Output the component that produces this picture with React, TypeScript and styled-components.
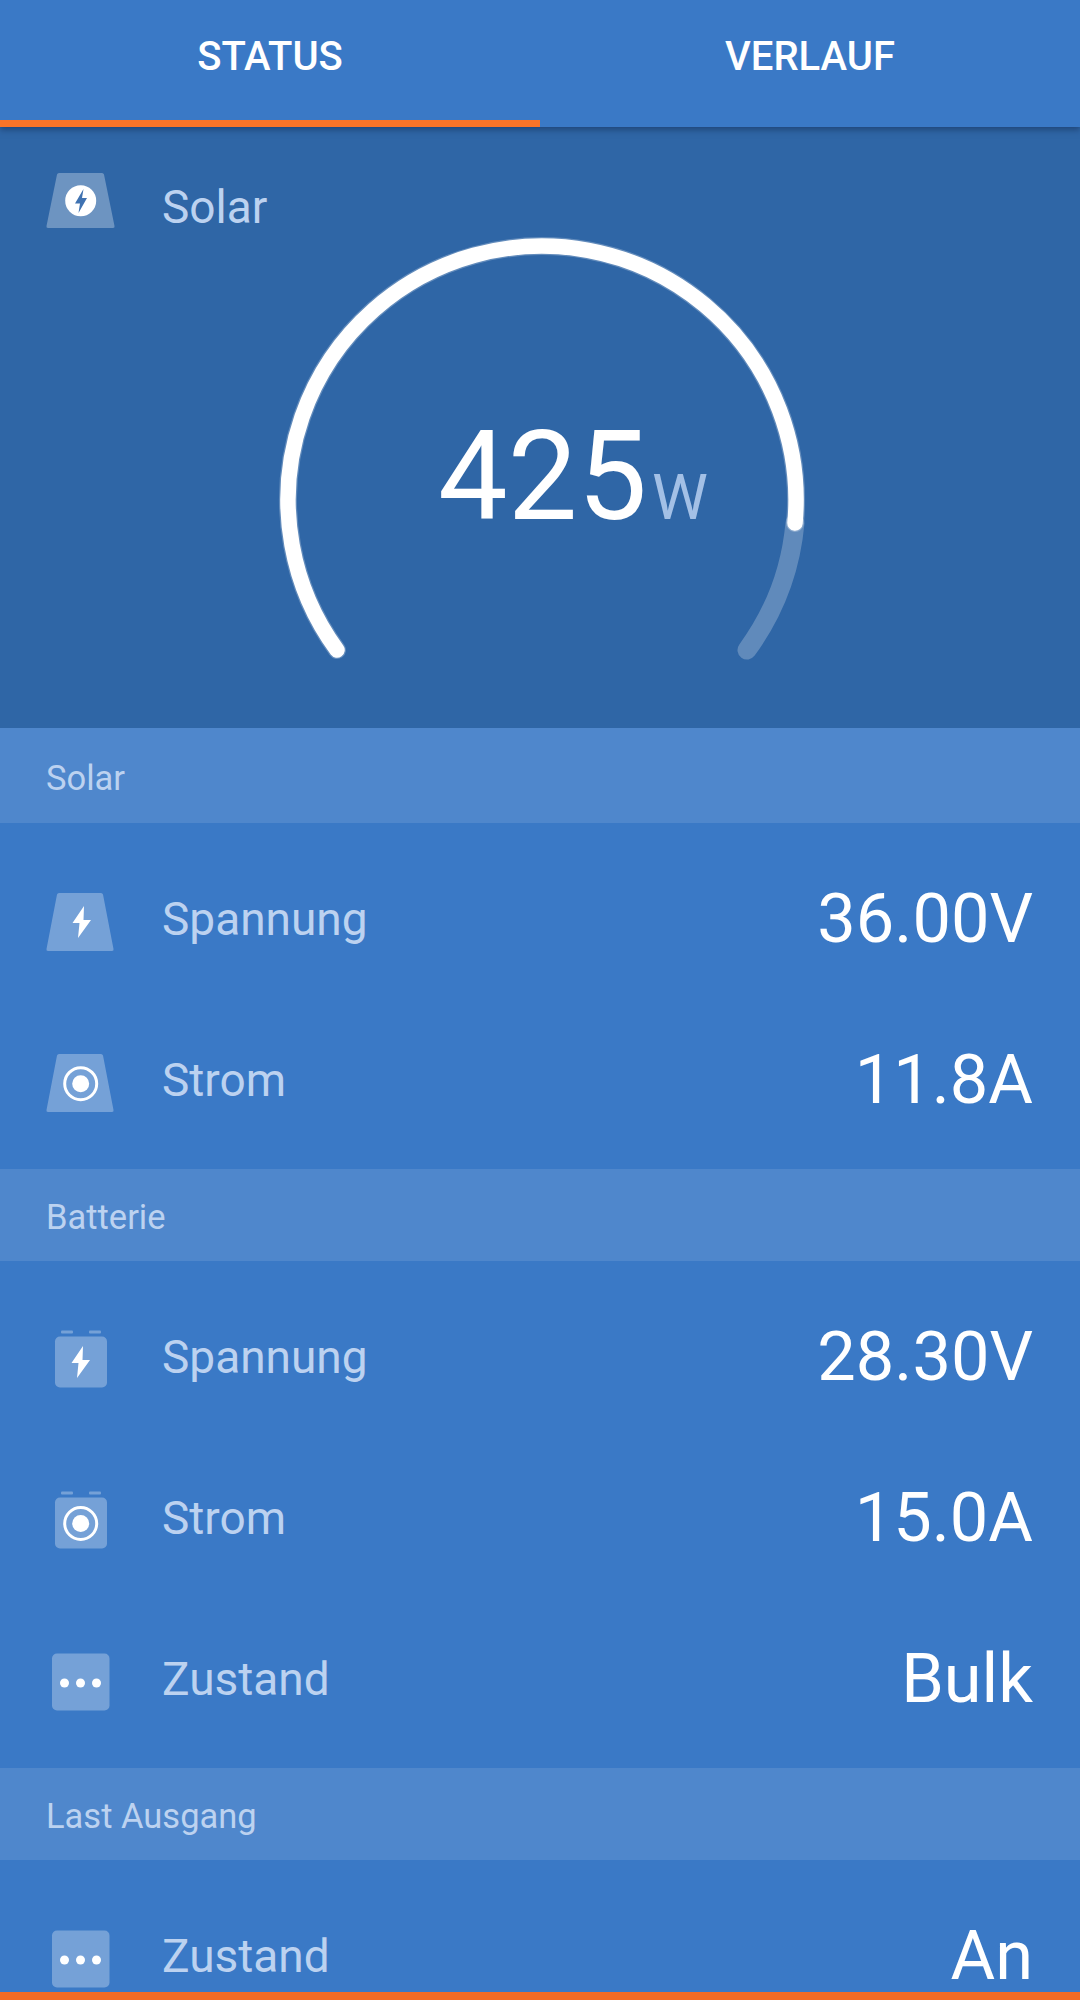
import React from "react";
import styled, { createGlobalStyle } from "styled-components";

const Global = createGlobalStyle`
  html, body { margin: 0; padding: 0; background: #3a79c6; }
  body { font-family: Roboto, "Liberation Sans", sans-serif; }
`;

const Page = styled.div`
  width: 1080px;
  height: 2000px;
  display: flex;
  flex-direction: column;
  overflow: hidden;
  background: #3a79c6;
  color: #fff;
`;

const TabBar = styled.nav`
  position: relative;
  z-index: 1;
  height: 127px;
  flex: none;
  display: grid;
  grid-template-columns: 1fr 1fr;
  background: #3a79c6;
  box-shadow: 0 3px 6px rgba(20, 45, 85, 0.55);
`;

const Tab = styled.div<{ $active?: boolean }>`
  display: flex;
  align-items: flex-start;
  justify-content: center;
  padding-top: 34px;
  box-sizing: border-box;
  font-size: 40px;
  line-height: 46px;
  font-weight: 500;
  color: #fff;
  border-bottom: 7px solid ${(p) => (p.$active ? "#f97428" : "transparent")};
`;

const Hero = styled.section`
  height: 601px;
  flex: none;
  background: #2f66a6;
  display: flex;
  flex-direction: column;
`;

const HeroHead = styled.div`
  height: 108px;
  flex: none;
  box-sizing: border-box;
  padding: 46px 0 0 46px;
  display: flex;
  align-items: flex-start;
  gap: 48px;
`;

const IconSlot = styled.div`
  width: 68px;
  height: 68px;
  flex: none;
  svg { display: block; }
`;

const Label = styled.span`
  font-size: 46px;
  line-height: 68px;
  font-weight: 400;
  color: #bcd2f0;
`;

const GaugeWrap = styled.div`
  position: relative;
  width: 1080px;
  height: 493px;
  svg { display: block; }
`;

const Reading = styled.div`
  position: absolute;
  left: 438px;
  top: 177px;
  display: flex;
  align-items: baseline;
  line-height: 130px;
`;

const ReadingValue = styled.span`
  font-size: 124px;
  font-weight: 400;
  color: #fff;
`;

const ReadingUnit = styled.span`
  font-size: 63px;
  margin-left: 5px;
  color: #a3c0e6;
`;

const List = styled.div`
  flex: 1;
  min-height: 0;
`;

const SectionHead = styled.div<{ $h: number }>`
  height: ${(p) => p.$h}px;
  box-sizing: border-box;
  padding: 4px 0 0 46px;
  display: flex;
  align-items: center;
  background: #4f87cc;
  font-size: 34.5px;
  color: #bcd2f0;
`;

const Rows = styled.div`
  padding: 18px 0 6px;
`;

const Row = styled.div`
  height: 161px;
  box-sizing: border-box;
  padding: 0 47px 0 46px;
  display: flex;
  align-items: center;
  gap: 48px;
  ${Label} { margin-bottom: 5px; }
`;

const Value = styled.span`
  margin-left: auto;
  margin-bottom: 4px;
  font-size: 68.5px;
  line-height: 1;
  font-weight: 400;
  color: #fff;
`;

const BottomBar = styled.div`
  position: relative;
  height: 8px;
  flex: none;
  background: #f26b25;
`;

const BOLT = "M38 18 L26.5 35 L33.5 35 L32 50 L45 32 L37.5 32 Z";
const ROW_TRAP = "M11 6.5 Q11.5 5 13 5 H55 Q56.5 5 57 6.5 L67.5 61 Q68 63 66 63 H2 Q0 63 0.5 61 Z";
const HERO_TRAP = "M11 1.5 Q11.5 0 13 0 H56 Q57.5 0 58 1.5 L68.5 53 Q69 55 67 55 H2 Q0 55 0.5 53 Z";
const FILL = "rgba(255,255,255,0.3)";

const Trapezoid = ({ d, children }: { d: string; children: React.ReactNode }) => (
  <svg width="70" height="68" viewBox="0 0 70 68">
    <path d={d} fill={FILL} />
    {children}
  </svg>
);

const Battery = ({ children }: { children: React.ReactNode }) => (
  <svg width="68" height="68" viewBox="0 0 68 68">
    <rect x="15" y="4.5" width="12" height="3" rx="1" fill={FILL} />
    <rect x="43" y="4.5" width="12" height="3" rx="1" fill={FILL} />
    <rect x="9" y="10.5" width="52" height="51" rx="5" fill={FILL} />
    {children}
  </svg>
);

const Target = ({ cy }: { cy: number }) => (
  <g>
    <circle cx="34.7" cy={cy} r="16" fill="none" stroke="#fff" strokeWidth="3" />
    <circle cx="34.7" cy={cy} r="8.5" fill="#fff" />
  </g>
);

const SolarBolt = () => (
  <Trapezoid d={HERO_TRAP}>
    <circle cx="34.7" cy="27.7" r="15.5" fill="#fff" />
    <path d="M37.5 16 L29 30.5 L34 30.5 L32.5 40 L41 25 L36 25 Z" fill="#3f72b1" />
  </Trapezoid>
);

const SolarVoltage = () => (
  <Trapezoid d={ROW_TRAP}>
    <path d={BOLT} fill="#fff" />
  </Trapezoid>
);

const SolarCurrent = () => (
  <Trapezoid d={ROW_TRAP}>
    <Target cy={34.7} />
  </Trapezoid>
);

const BatteryVoltage = () => (
  <Battery>
    <path d={BOLT} fill="#fff" transform="translate(-1 2)" />
  </Battery>
);

const BatteryCurrent = () => (
  <Battery>
    <Target cy={36.5} />
  </Battery>
);

const Dots = () => (
  <svg width="68" height="68" viewBox="0 0 68 68">
    <rect x="6" y="5.5" width="57.5" height="57" rx="5" fill={FILL} />
    <circle cx="18.5" cy="35" r="4.5" fill="#fff" />
    <circle cx="34.5" cy="35" r="4.5" fill="#fff" />
    <circle cx="50.5" cy="35" r="4.5" fill="#fff" />
  </svg>
);

const sections = [
  {
    title: "Solar",
    h: 95,
    rows: [
      { icon: <SolarVoltage />, label: "Spannung", value: "36.00V" },
      { icon: <SolarCurrent />, label: "Strom", value: "11.8A" },
    ],
  },
  {
    title: "Batterie",
    h: 92,
    rows: [
      { icon: <BatteryVoltage />, label: "Spannung", value: "28.30V" },
      { icon: <BatteryCurrent />, label: "Strom", value: "15.0A" },
      { icon: <Dots />, label: "Zustand", value: "Bulk" },
    ],
  },
  {
    title: "Last Ausgang",
    h: 92,
    rows: [{ icon: <Dots />, label: "Zustand", value: "An" }],
  },
];

const WHITE_ARC = "M337 650 A254 254 0 1 1 795 523";

export default function App() {
  return (
    <Page>
      <Global />
      <TabBar>
        <Tab $active>STATUS</Tab>
        <Tab>VERLAUF</Tab>
      </TabBar>
      <Hero>
        <HeroHead>
          <IconSlot>
            <SolarBolt />
          </IconSlot>
          <Label>Solar</Label>
        </HeroHead>
        <GaugeWrap>
          <svg width="1080" height="493" viewBox="0 235 1080 493" fill="none">
            <path
              d="M795 523 A254 254 0 0 1 747 650"
              stroke="rgba(255,255,255,0.24)"
              strokeWidth="19"
              strokeLinecap="round"
            />
            <path d={WHITE_ARC} stroke="rgba(255,255,255,0.25)" strokeWidth="18" strokeLinecap="round" />
            <path d={WHITE_ARC} stroke="#fff" strokeWidth="15.5" strokeLinecap="round" />
          </svg>
          <Reading>
            <ReadingValue>425</ReadingValue>
            <ReadingUnit>W</ReadingUnit>
          </Reading>
        </GaugeWrap>
      </Hero>
      <List>
        {sections.map((s) => (
          <section key={s.title}>
            <SectionHead $h={s.h}>{s.title}</SectionHead>
            <Rows>
              {s.rows.map((r) => (
                <Row key={r.label + r.value}>
                  <IconSlot>{r.icon}</IconSlot>
                  <Label>{r.label}</Label>
                  <Value>{r.value}</Value>
                </Row>
              ))}
            </Rows>
          </section>
        ))}
      </List>
      <BottomBar />
    </Page>
  );
}
